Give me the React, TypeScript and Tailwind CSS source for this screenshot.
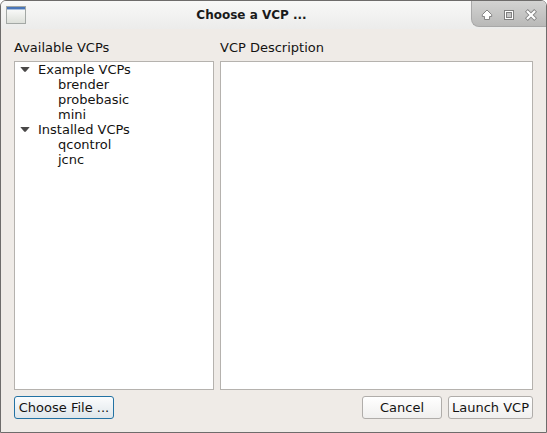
import React, { useState } from 'react';

interface VcpGroup {
  name: string;
  items: string[];
}

const groups: VcpGroup[] = [
  { name: 'Example VCPs', items: ['brender', 'probebasic', 'mini'] },
  { name: 'Installed VCPs', items: ['qcontrol', 'jcnc'] },
];

const TitleBar: React.FC = () => (
  <header className="flex items-start h-7 bg-linear-to-b from-[#f8f8f7] to-[#ececeb]">
    <svg className="shrink-0 ml-[5px] mt-[5px]" width="20" height="18" viewBox="0 0 20 18" aria-hidden="true">
      <defs>
        <linearGradient id="window-fill" x1="0" y1="0" x2="0" y2="1">
          <stop offset="0" stopColor="#ffffff" />
          <stop offset="1" stopColor="#dcdfd9" />
        </linearGradient>
      </defs>
      <rect x="0.5" y="0.5" width="19" height="17" fill="url(#window-fill)" stroke="#a3a8a5" />
      <rect x="1" y="1" width="18" height="2" fill="#4a76b8" />
      <rect x="1" y="3" width="18" height="1" fill="#a9bfdf" />
    </svg>
    <h1 className="flex-1 pl-1.5 text-center text-[12px] leading-7 font-bold text-[#1a1a1a]">Choose a VCP ...</h1>
    <div className="flex shrink-0 h-[26px] px-1 rounded-bl-lg border-l border-b border-[#a8a8a8] bg-linear-to-b from-[#d3d3d2] to-[#b9b9b8]">
      <button type="button" aria-label="Roll up" className="flex items-center justify-center w-[22px] pt-0.5">
        <svg width="12" height="12" viewBox="0 0 12 12">
          <path
            d="M6 1 10.7 5.7V7.5H8.5V10.5H3.5V7.5H1.3V5.7Z"
            fill="#fff"
            stroke="#858585"
            strokeLinejoin="round"
          />
        </svg>
      </button>
      <button type="button" aria-label="Maximize" className="flex items-center justify-center w-[22px] pt-0.5">
        <svg width="10" height="10" viewBox="0 0 10 10" shapeRendering="crispEdges">
          <rect x="0.5" y="0.5" width="9" height="9" fill="#fff" stroke="#808080" />
          <rect x="2.5" y="2.5" width="5" height="5" fill="#c6c6c6" stroke="#808080" />
        </svg>
      </button>
      <button type="button" aria-label="Close" className="flex items-center justify-center w-[22px] pt-0.5">
        <svg width="12" height="12" viewBox="0 0 12 12" strokeLinecap="square">
          <path d="M2.8 2.8 9.2 9.2M9.2 2.8 2.8 9.2" stroke="#858585" strokeWidth="4" />
          <path d="M2.7 2.7 9.3 9.3M9.3 2.7 2.7 9.3" stroke="#fff" strokeWidth="2.2" />
        </svg>
      </button>
    </div>
  </header>
);

const VcpTree: React.FC = () => {
  const [closed, setClosed] = useState<string[]>([]);

  const toggle = (name: string) => {
    setClosed((prev) => (prev.includes(name) ? prev.filter((n) => n !== name) : [...prev, name]));
  };

  return (
    <ul aria-labelledby="available-label" className="flex-1 border border-[#b5b2ae] bg-white leading-[15px]">
      {groups.map((group) => {
        const open = !closed.includes(group.name);
        return (
          <li key={group.name}>
            <button
              type="button"
              aria-expanded={open}
              onClick={() => toggle(group.name)}
              className="flex items-center w-full gap-2 pl-[5px] text-left"
            >
              <svg width="10" height="7" viewBox="0 0 10 7" className={open ? '' : '-rotate-90'} aria-hidden="true">
                <path d="M0.3 1H9.7L5.7 5.8H4.3Z" fill="#4a4848" />
              </svg>
              {group.name}
            </button>
            {open && (
              <ul className="pl-[43px]">
                {group.items.map((item) => (
                  <li key={item}>{item}</li>
                ))}
              </ul>
            )}
          </li>
        );
      })}
    </ul>
  );
};

const App: React.FC = () => {
  const buttonStyle = 'h-[23px] rounded-[3px] border whitespace-nowrap text-center';

  return (
    <main className="flex flex-col min-h-screen overflow-hidden rounded-t-md border border-[#6e6c6b] bg-[#efebe7] font-['DejaVu_Sans',sans-serif] text-[13px] text-[#141312]">
      <TitleBar />
      <div className="flex flex-col flex-1 gap-1.5 px-[13px] pt-[11px] pb-[13px]">
        <div className="flex flex-1 gap-1.5">
          <section className="flex flex-col shrink-0 w-50 gap-[5px]">
            <h2 id="available-label" className="leading-4">Available VCPs</h2>
            <VcpTree />
          </section>
          <section className="flex flex-col flex-1 gap-[5px]">
            <label htmlFor="description" className="leading-4">VCP Description</label>
            <textarea
              id="description"
              readOnly
              className="flex-1 w-full p-1 resize-none border border-[#b5b2ae] bg-white outline-none"
            />
          </section>
        </div>
        <footer className="flex gap-1.5">
          <button type="button" className={`${buttonStyle} w-25 mr-auto border-[#2372a3] bg-linear-to-b from-[#fbfcfd] to-[#dfe6ea]`}>
            Choose File ...
          </button>
          <button type="button" className={`${buttonStyle} w-20 border-[#b0adaa] bg-linear-to-b from-white to-[#f0efee]`}>
            Cancel
          </button>
          <button type="button" className={`${buttonStyle} w-[85px] border-[#b0adaa] bg-linear-to-b from-white to-[#f0efee]`}>
            Launch VCP
          </button>
        </footer>
      </div>
    </main>
  );
};

export default App;
